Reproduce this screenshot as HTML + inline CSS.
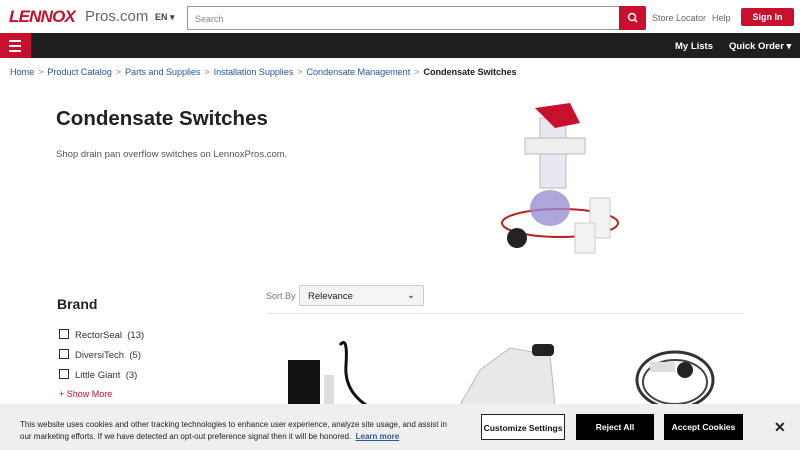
<!DOCTYPE html>
<html><head><meta charset="utf-8"><style>
*{box-sizing:border-box;margin:0;padding:0}
body{width:800px;height:450px;overflow:hidden;font-family:"Liberation Sans",sans-serif;background:#fff;position:relative;color:#222}
.hdr{height:33px;position:relative}
.logo{position:absolute;left:9px;top:7px;color:#c8102e;font-weight:bold;font-style:italic;font-size:17px;letter-spacing:-0.8px}
.pros{position:absolute;left:85px;top:8px;font-size:15px;color:#666}
.en{position:absolute;left:155px;top:12px;font-size:9px;color:#444;font-weight:bold}
.search{position:absolute;left:187px;top:6px;width:433px;height:24px;border:1px solid #999;font-size:9px;color:#888;padding:7px 7px}
.sbtn{position:absolute;left:619px;top:6px;width:27px;height:24px;background:#c8102e;border-radius:0 2px 2px 0}
.top a{position:absolute;top:13px;font-size:9px;color:#666}
.sign{position:absolute;left:741px;top:8px;width:53px;height:18px;background:#c8102e;color:#fff;font-size:9px;font-weight:bold;text-align:center;line-height:18px;border-radius:2px}
.nav{position:absolute;top:33px;left:0;width:800px;height:25px;background:#1f1f1f}
.ham{position:absolute;left:0;top:0;width:31px;height:25px;background:#c8102e}
.ham i{position:absolute;left:9px;width:12px;height:2px;background:#fff}
.nav span{position:absolute;top:8px;color:#fff;font-size:9.5px;font-weight:bold}
.bc{position:absolute;top:67px;left:10px;font-size:9.2px;color:#2a5a9a;letter-spacing:-0.1px}
.bc b{color:#222}
.bc .s{color:#888;margin:0 4px}
h1{position:absolute;left:56px;top:107px;font-size:20.5px;font-weight:bold;color:#222}
.sub{position:absolute;left:56px;top:149px;font-size:9.5px;color:#555}
.brand{position:absolute;left:57px;top:296px;font-size:14px;font-weight:bold}
.cb{position:absolute;left:59px;font-size:9.5px;color:#333}
.cb i{display:inline-block;width:10px;height:10px;border:1.3px solid #333;vertical-align:-1px;margin-right:6px}
.more{position:absolute;left:59px;top:389px;font-size:9px;color:#c8102e}
.sortl{position:absolute;left:266px;top:291px;font-size:9px;color:#777}
.sel{position:absolute;left:299px;top:285px;width:125px;height:21px;border:1px solid #ccc;background:#f4f4f4;border-radius:2px;font-size:9.5px;padding:5px 8px;color:#222}
.hr{position:absolute;left:266px;top:313px;width:478px;height:1px;background:#e6e6e6}
.ck{position:absolute;left:0;top:404px;width:800px;height:46px;background:#efefef}
.ckt{position:absolute;left:20px;top:15px;font-size:8px;line-height:12px;color:#222;width:440px}
.ckt a{color:#2a5a9a;font-weight:bold;text-decoration:underline}
.b{position:absolute;top:10px;height:26px;font-size:8.5px;font-weight:bold;text-align:center;line-height:26px}
</style></head><body>
<div class="hdr">
<div class="logo">LENNOX</div><div class="pros">Pros.com</div><div class="en">EN ▾</div>
<div class="search">Search</div>
<div class="sbtn"><svg width="27" height="24"><circle cx="13" cy="11" r="3.5" stroke="#fff" stroke-width="1.5" fill="none"/><line x1="15.5" y1="13.5" x2="18" y2="16" stroke="#fff" stroke-width="1.6"/></svg></div>
<div class="top"><a style="left:652px">Store Locator</a><a style="left:712px">Help</a></div>
<div class="sign">Sign In</div>
</div>
<div class="nav"><div class="ham"><i style="top:7px"></i><i style="top:12px"></i><i style="top:17px"></i></div>
<span style="left:675px">My Lists</span><span style="left:729px">Quick Order ▾</span></div>
<div class="bc">Home<span class="s">&gt;</span>Product Catalog<span class="s">&gt;</span>Parts and Supplies<span class="s">&gt;</span>Installation Supplies<span class="s">&gt;</span>Condensate Management<span class="s">&gt;</span><b>Condensate Switches</b></div>
<h1>Condensate Switches</h1>
<div class="sub">Shop drain pan overflow switches on LennoxPros.com.</div>
<svg style="position:absolute;left:495px;top:98px" width="130" height="160">
<ellipse cx="65" cy="125" rx="58" ry="14" fill="none" stroke="#b22" stroke-width="2"/>
<rect x="45" y="20" width="26" height="70" fill="#e8e8f0" stroke="#bbb"/>
<rect x="30" y="40" width="60" height="16" fill="#eee" stroke="#bbb"/>
<path d="M40 10 L75 5 L85 25 L60 30 Z" fill="#c8102e"/>
<ellipse cx="55" cy="110" rx="20" ry="18" fill="#9a8fd0" opacity=".8"/>
<circle cx="22" cy="140" r="10" fill="#222"/>
<rect x="95" y="100" width="20" height="40" fill="#f2f2f2" stroke="#ccc"/>
<rect x="80" y="125" width="20" height="30" fill="#f2f2f2" stroke="#ccc"/>
</svg>
<div class="brand">Brand</div>
<div class="cb" style="top:329px"><i></i>RectorSeal &nbsp;(13)</div>
<div class="cb" style="top:349px"><i></i>DiversiTech &nbsp;(5)</div>
<div class="cb" style="top:369px"><i></i>Little Giant &nbsp;(3)</div>
<div class="more">+ Show More</div>
<div class="sortl">Sort By</div>
<div class="sel">Relevance<span style="position:absolute;right:8px;top:4px">⌄</span></div>
<div class="hr"></div>
<svg style="position:absolute;left:280px;top:340px" width="120" height="65"><rect x="8" y="20" width="32" height="45" fill="#111"/><path d="M60 5 q8 -10 6 20 q-2 25 20 40" stroke="#111" stroke-width="3" fill="none"/><rect x="44" y="35" width="10" height="30" fill="#ddd"/></svg>
<svg style="position:absolute;left:450px;top:340px" width="120" height="65"><path d="M30 30 L60 8 L100 15 L105 65 L10 65 Z" fill="#e8e8e6" stroke="#bbb"/><rect x="82" y="4" width="22" height="12" rx="4" fill="#222"/></svg>
<svg style="position:absolute;left:620px;top:340px" width="120" height="65"><ellipse cx="55" cy="40" rx="38" ry="28" fill="none" stroke="#333" stroke-width="3"/><ellipse cx="55" cy="42" rx="32" ry="22" fill="none" stroke="#444" stroke-width="2"/><rect x="30" y="22" width="25" height="10" fill="#ddd"/><circle cx="65" cy="30" r="8" fill="#222"/></svg>
<div class="ck">
<div class="ckt">This website uses cookies and other tracking technologies to enhance user experience, analyze site usage, and assist in our marketing efforts. If we have detected an opt-out preference signal then it will be honored. &nbsp;<a>Learn more</a></div>
<div class="b" style="left:481px;width:84px;background:#fff;border:1px solid #222;color:#111">Customize Settings</div>
<div class="b" style="left:576px;width:78px;background:#000;color:#fff">Reject All</div>
<div class="b" style="left:664px;width:79px;background:#000;color:#fff">Accept Cookies</div>
<div style="position:absolute;left:774px;top:15px;font-size:14px;font-weight:bold;color:#222">✕</div>
</div>
</body></html>
